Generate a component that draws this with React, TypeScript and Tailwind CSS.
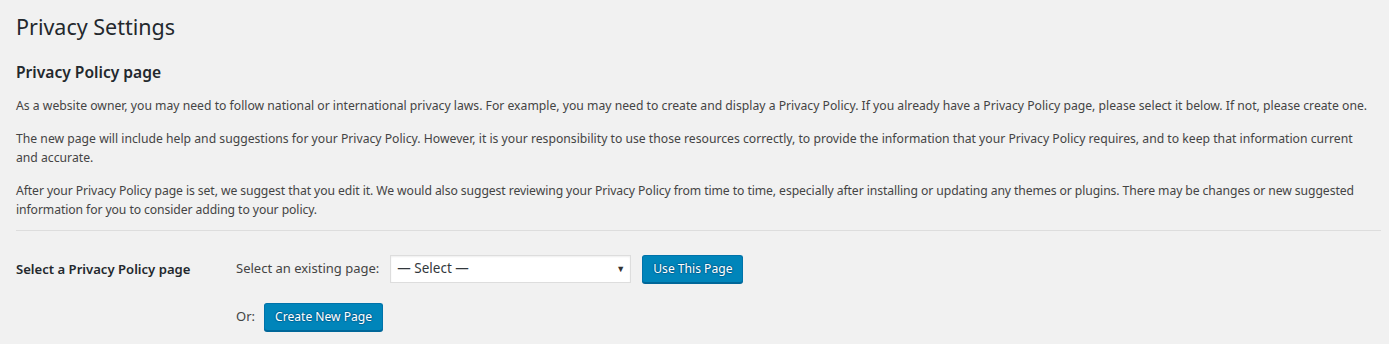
import React from "react";

const font = { fontFamily: '"Noto Sans", "Open Sans", sans-serif' };

function Btn({ children }: { children: React.ReactNode }) {
  return (
    <button
      type="button"
      className="h-[28px] rounded-[3px] border border-[#0073aa] border-b-[#006799] bg-[#0085ba] px-[10px] pb-[1px] text-[12.1px] leading-[26px] text-white shadow-[0_1px_0_#006799] [text-shadow:0_-1px_1px_#006799,1px_0_1px_#006799,0_1px_1px_#006799,-1px_0_1px_#006799]"
    >
      {children}
    </button>
  );
}

export default function App() {
  return (
    <div className="min-h-[344px] bg-[#f1f1f1] pl-[16px] pr-[8px] pt-[12px] text-[#444]" style={font}>
      <h1 className="text-[21.5px] font-normal leading-[30px] text-[#23282d]">Privacy Settings</h1>
      <h2 className="mt-[19px] text-[15.6px] font-semibold leading-[22px] text-[#23282d]">Privacy Policy page</h2>
      <div className="mt-[13px] flex flex-col gap-[13px] text-[12.2px] leading-[19.5px]">
        <p>
          As a website owner, you may need to follow national or international privacy laws. For example, you may need to create and display a Privacy Policy. If you already have a Privacy Policy page, please select it below. If not, please create one.
        </p>
        <p className="pr-[10px]">
          The new page will include help and suggestions for your Privacy Policy. However, it is your responsibility to use those resources correctly, to provide the information that your Privacy Policy requires, and to keep that information current and accurate.
        </p>
        <p className="tracking-[-0.09px]">
          After your Privacy Policy page is set, we suggest that you edit it. We would also suggest reviewing your Privacy Policy from time to time, especially after installing or updating any themes or plugins. There may be changes or new suggested information for you to consider adding to your policy.
        </p>
      </div>
      <div className="mt-[10px] border-t border-[#ddd]" />
      <div className="flex pt-[24px]">
        <div className="w-[220px] pt-[4px] text-[13.1px] font-semibold leading-[20px] text-[#23282d]">
          Select a Privacy Policy page
        </div>
        <div className="flex flex-col gap-[20px]">
          <div className="flex items-center">
            <span className="text-[13px]">Select an existing page:</span>
            <div className="ml-[11px] flex h-[28px] w-[241px] items-center justify-between border border-[#ddd] bg-white pl-[6px] pr-[5px] text-[13.5px] text-[#32373c] shadow-[inset_0_1px_2px_rgba(0,0,0,0.07)]">
              <span>— Select —</span>
              <span className="text-[9px] text-[#333]">▼</span>
            </div>
            <div className="ml-[11px]">
              <Btn>Use This Page</Btn>
            </div>
          </div>
          <div className="flex items-center">
            <span className="text-[13px]">Or:</span>
            <div className="ml-[9px]">
              <Btn>Create New Page</Btn>
            </div>
          </div>
        </div>
      </div>
    </div>
  );
}
